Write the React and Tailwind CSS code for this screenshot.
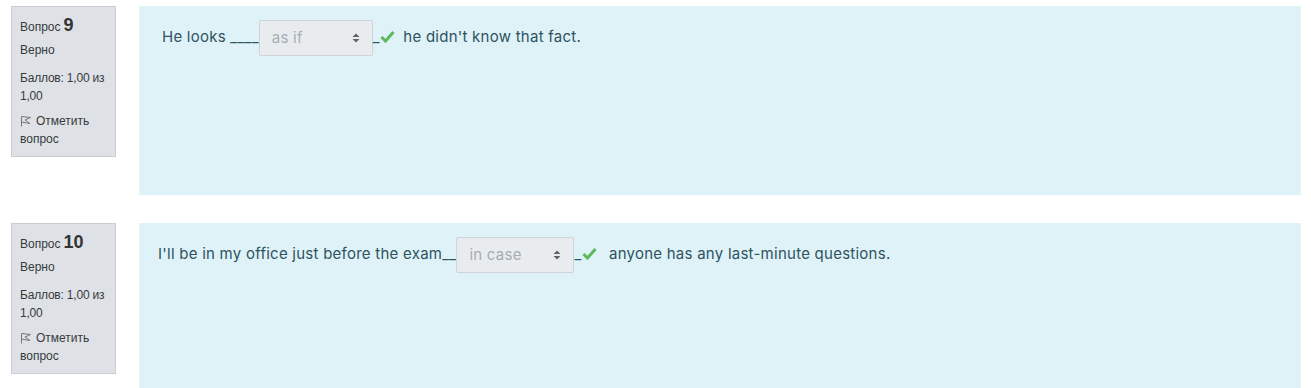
const Info = ({ num }) => (
  <div className="w-[105px] shrink-0 self-start bg-[#dee2e6] border border-[#c9ced3] pl-[8px] pr-[2px] pt-[9px] pb-[8px] text-[12px] leading-[18px] text-[#373a3c]" style={{ fontFamily: '"Liberation Sans", Arial, sans-serif' }}>
    <div className="flex items-baseline gap-[3px]">
      <span>Вопрос</span>
      <span className="text-[18px] font-bold text-[#333]">{num}</span>
    </div>
    <div className="mt-[5px]">Верно</div>
    <div className="mt-[10px] tracking-[-0.2px]">Баллов: 1,00 из 1,00</div>
    <div className="mt-[7px]">
      <svg width="12" height="12" viewBox="0 0 12 12" className="inline-block mr-[4px] -mt-[2px]" fill="none" stroke="#777" strokeWidth="1">
        <path d="M1.5 11.5 V1.5 L10.5 2.5 L5 5 L10 8.5 L1.5 7" />
      </svg>
      Отметить вопрос
    </div>
  </div>
);

const Select = ({ value, width }) => (
  <span className={`inline-flex items-center justify-between h-[36px] ${width} bg-[#e9ecef] border border-[#ced4da] rounded-[2px] pl-[12px] pr-[12px] text-[#a6adb3] align-middle`}>
    <span>{value}</span>
    <svg width="8" height="10" viewBox="0 0 8 10" fill="#5f6368">
      <path d="M4 0.5 L7.5 4 H0.5 Z" />
      <path d="M4 9.5 L7.5 6 H0.5 Z" />
    </svg>
  </span>
);

const Check = () => (
  <svg width="15" height="13" viewBox="0 0 15 13" className="inline-block align-middle -mt-[3px]">
    <path d="M1.5 7 L5.5 11 L13.5 2" fill="none" stroke="#5cb85c" strokeWidth="3" />
  </svg>
);

const Question = ({ num, children, height, pl }) => (
  <div className="flex">
    <Info num={num} />
    <div className={`ml-[23px] w-[1162px] ${height} bg-[#def2f8] ${pl} pt-[14px] text-[15px] tracking-[0.25px] text-[#2f5360]`} style={{ fontFamily: 'Inter, "Open Sans", sans-serif' }}>
      {children}
    </div>
  </div>
);

export default function App() {
  return (
    <div className="w-[1311px] h-[388px] overflow-hidden bg-white pl-[11px] pt-[6px] flex flex-col gap-[28px]">
      <Question num="9" height="h-[189px]" pl="pl-[23px]">
        He looks <span className="whitespace-pre">____</span><Select value="as if" width="w-[114px]" /><span>_</span><Check /> <span className="ml-[4px]">he didn't know that fact.</span>
      </Question>
      <Question num="10" height="h-[170px]" pl="pl-[19px]">
        I'll be in my office just before the exam<span>__</span><Select value="in case" width="w-[118px]" /><span>_</span><Check /> <span className="ml-[8px]">anyone has any last-minute questions.</span>
      </Question>
    </div>
  );
}
